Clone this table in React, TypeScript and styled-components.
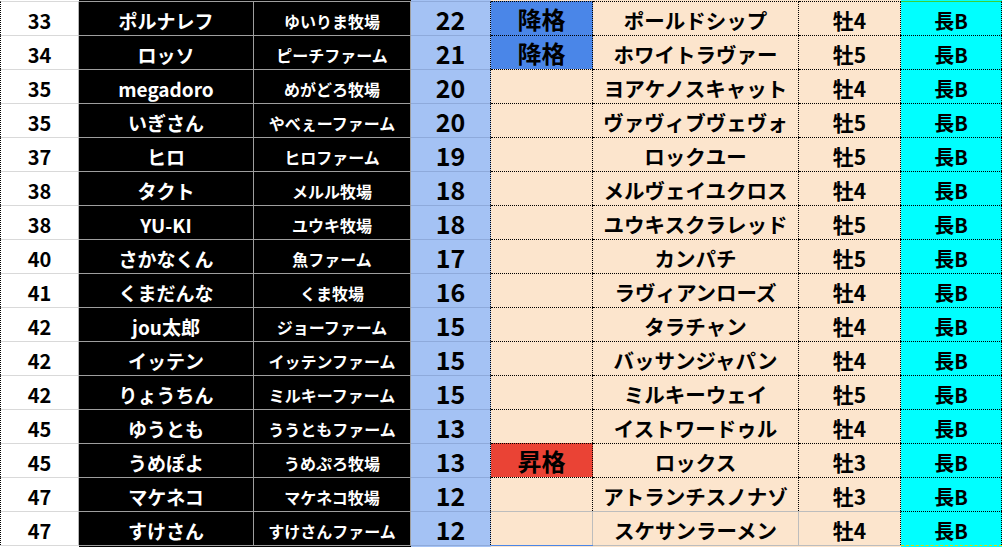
import React from 'react'
import styled, { createGlobalStyle, css } from 'styled-components'

const GlobalStyle = createGlobalStyle`
  html, body {
    margin: 0;
    padding: 0;
    background: #ffffff;
  }
  body {
    font-family: "Noto Sans CJK JP", "Noto Sans", sans-serif;
    overflow: hidden;
  }
`

const COLS = '79px 175px 157px 80px 102px 206px 102px 101px'

type Kind = 'rank' | 'name' | 'farm' | 'point' | 'status' | 'horse' | 'sex' | 'dist'
type Status = '' | '降格' | '昇格'

const Sheet = styled.div`
  width: 1002px;
  height: 547px;
  overflow: hidden;
`

const Row = styled.div`
  display: grid;
  grid-template-columns: ${COLS};
  height: 34px;
`

const EdgeRow = styled(Row)<{ $h: number }>`
  height: ${(p) => p.$h}px;
`

const bg: Record<Kind, string> = {
  rank: '#ffffff',
  name: '#000000',
  farm: '#000000',
  point: '#a4c2f4',
  status: '#fce5cd',
  horse: '#fce5cd',
  sex: '#fce5cd',
  dist: '#00ffff',
}

const statusBg: Record<Status, string> = {
  '': '#fce5cd',
  '降格': '#4a86e8',
  '昇格': '#ea4335',
}

const size: Record<Kind, number> = {
  rank: 20,
  name: 19,
  farm: 16,
  point: 25,
  status: 24,
  horse: 20.5,
  sex: 21,
  dist: 20,
}

const drop: Record<Kind, number> = {
  rank: 3,
  name: 3,
  farm: 5,
  point: 0,
  status: 0,
  horse: 2,
  sex: 3,
  dist: 3,
}

const Cell = styled.div<{ $kind: Kind; $status?: Status; $last?: boolean; $first?: boolean }>`
  box-sizing: border-box;
  display: flex;
  align-items: center;
  justify-content: center;
  white-space: nowrap;
  overflow: hidden;
  font-weight: 700;
  font-size: ${(p) => size[p.$kind]}px;
  padding-top: ${(p) => drop[p.$kind]}px;
  color: ${(p) => (p.$kind === 'name' || p.$kind === 'farm' ? '#ffffff' : '#000000')};
  background: ${(p) => (p.$kind === 'status' ? statusBg[p.$status ?? ''] : bg[p.$kind])};
  border-top: 1px dotted #000;
  border-right: 1px dotted #000;

  ${(p) =>
    p.$kind === 'rank' &&
    css`
      border-left: 1px dotted #000;
      border-top: 1px solid #d9d9d9;
      border-right: 1px solid #b7b7b7;
    `}
  ${(p) =>
    (p.$kind === 'name' || p.$kind === 'farm') &&
    css`
      border-top: 1px solid #9e9e9e;
      border-right: 1px solid #9e9e9e;
    `}
  ${(p) =>
    p.$kind === 'point' &&
    css`
      border-top: 1px solid #8eaadb;
      border-right: 1px dotted #000;
    `}
  ${(p) =>
    p.$last &&
    (p.$kind === 'status' || p.$kind === 'horse' || p.$kind === 'sex') &&
    css`
      border-top: 1px solid #bdbdbd;
    `}
  ${(p) =>
    p.$last &&
    (p.$kind === 'status' || p.$kind === 'horse') &&
    css`
      border-right: 1px solid #bdbdbd;
    `}
  ${(p) =>
    p.$first &&
    p.$kind === 'dist' &&
    css`
      border-top: 1px solid #3ad13a;
    `}
`

const EdgeCell = styled.div<{ $kind: Kind; $line?: string }>`
  box-sizing: border-box;
  background: ${(p) => bg[p.$kind]};
  border-top: ${(p) => (p.$line ? `1px ${p.$line}` : 'none')};
`

interface Entry {
  rank: number
  name: string
  farm: string
  point: number
  status: Status
  horse: string
  sex: string
  dist: string
}

const rows: Entry[] = [
  { rank: 33, name: 'ポルナレフ', farm: 'ゆいりま牧場', point: 22, status: '降格', horse: 'ポールドシップ', sex: '牡4', dist: '長B' },
  { rank: 34, name: 'ロッソ', farm: 'ピーチファーム', point: 21, status: '降格', horse: 'ホワイトラヴァー', sex: '牡5', dist: '長B' },
  { rank: 35, name: 'megadoro', farm: 'めがどろ牧場', point: 20, status: '', horse: 'ヨアケノスキャット', sex: '牡4', dist: '長B' },
  { rank: 35, name: 'いぎさん', farm: 'やべぇーファーム', point: 20, status: '', horse: 'ヴァヴィブヴェヴォ', sex: '牡5', dist: '長B' },
  { rank: 37, name: 'ヒロ', farm: 'ヒロファーム', point: 19, status: '', horse: 'ロックユー', sex: '牡5', dist: '長B' },
  { rank: 38, name: 'タクト', farm: 'メルル牧場', point: 18, status: '', horse: 'メルヴェイユクロス', sex: '牡4', dist: '長B' },
  { rank: 38, name: 'YU-KI', farm: 'ユウキ牧場', point: 18, status: '', horse: 'ユウキスクラレッド', sex: '牡5', dist: '長B' },
  { rank: 40, name: 'さかなくん', farm: '魚ファーム', point: 17, status: '', horse: 'カンパチ', sex: '牡5', dist: '長B' },
  { rank: 41, name: 'くまだんな', farm: 'くま牧場', point: 16, status: '', horse: 'ラヴィアンローズ', sex: '牡4', dist: '長B' },
  { rank: 42, name: 'jou太郎', farm: 'ジョーファーム', point: 15, status: '', horse: 'タラチャン', sex: '牡4', dist: '長B' },
  { rank: 42, name: 'イッテン', farm: 'イッテンファーム', point: 15, status: '', horse: 'バッサンジャパン', sex: '牡4', dist: '長B' },
  { rank: 42, name: 'りょうちん', farm: 'ミルキーファーム', point: 15, status: '', horse: 'ミルキーウェイ', sex: '牡5', dist: '長B' },
  { rank: 45, name: 'ゆうとも', farm: 'ううともファーム', point: 13, status: '', horse: 'イストワードゥル', sex: '牡4', dist: '長B' },
  { rank: 45, name: 'うめぽよ', farm: 'うめぷろ牧場', point: 13, status: '昇格', horse: 'ロックス', sex: '牡3', dist: '長B' },
  { rank: 47, name: 'マケネコ', farm: 'マケネコ牧場', point: 12, status: '', horse: 'アトランチスノナゾ', sex: '牡3', dist: '長B' },
  { rank: 47, name: 'すけさん', farm: 'すけさんファーム', point: 12, status: '', horse: 'スケサンラーメン', sex: '牡4', dist: '長B' },
]

const kinds: Kind[] = ['rank', 'name', 'farm', 'point', 'status', 'horse', 'sex', 'dist']

const tailLines: Record<Kind, string> = {
  rank: 'solid #d9d9d9',
  name: 'solid #9e9e9e',
  farm: 'solid #9e9e9e',
  point: 'solid #8eaadb',
  status: 'solid #4a86e8',
  horse: 'solid #bdbdbd',
  sex: 'solid #bdbdbd',
  dist: 'dashed #e6d800',
}

export default function App() {
  return (
    <>
      <GlobalStyle />
      <Sheet>
        <EdgeRow $h={1}>
          {kinds.map((k) => (
            <EdgeCell key={k} $kind={k} />
          ))}
        </EdgeRow>
        {rows.map((r, i) => (
          <Row key={i}>
            <Cell $kind="rank">{r.rank}</Cell>
            <Cell $kind="name">{r.name}</Cell>
            <Cell $kind="farm">{r.farm}</Cell>
            <Cell $kind="point">{r.point}</Cell>
            <Cell $kind="status" $status={r.status} $last={i === rows.length - 1}>
              {r.status}
            </Cell>
            <Cell $kind="horse" $last={i === rows.length - 1}>{r.horse}</Cell>
            <Cell $kind="sex" $last={i === rows.length - 1}>{r.sex}</Cell>
            <Cell $kind="dist" $first={i === 0}>{r.dist}</Cell>
          </Row>
        ))}
        <EdgeRow $h={2}>
          {kinds.map((k) => (
            <EdgeCell key={k} $kind={k} $line={tailLines[k]} />
          ))}
        </EdgeRow>
      </Sheet>
    </>
  )
}
